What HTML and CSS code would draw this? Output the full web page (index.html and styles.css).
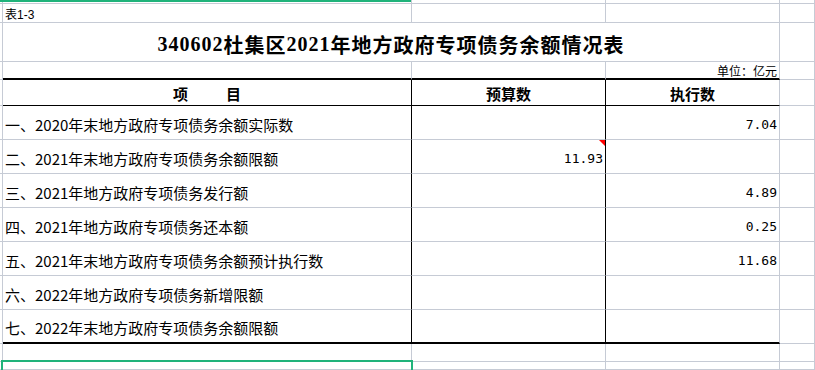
FILE: index.html
```html
<!DOCTYPE html>
<html lang="zh-CN">
<head>
<meta charset="utf-8">
<title>340602杜集区2021年地方政府专项债务余额情况表</title>
<link rel="stylesheet" href="styles.css">
</head>
<body>
<div class="sheet">
  <!-- row 0 (partial) -->
  <div class="c"></div><div class="c"></div><div class="c"></div><div class="c"></div><div class="c"></div>
  <!-- row 1 -->
  <div class="c"></div><div class="c note">表<span class="lat">1-3</span></div><div class="c"></div><div class="c"></div><div class="c"></div>
  <!-- row 2 title -->
  <div class="c"></div><div class="c title"><span class="lat">340602</span>杜集区<span class="lat">2021</span>年地方政府专项债务余额情况表</div><div class="c"></div>
  <!-- row 3 unit -->
  <div class="c"></div><div class="c tb"></div><div class="c tb"></div><div class="c tb unit">单位：亿元</div><div class="c"></div>
  <!-- row 4 header -->
  <div class="c"></div>
  <div class="c h hb vb"><span class="gap">项</span>目</div>
  <div class="c h hb vb">预算数</div>
  <div class="c h hb">执行数</div>
  <div class="c"></div>
  <!-- body rows -->
  <div class="c"></div><div class="c t vb">一、2020年末地方政府专项债务余额实际数</div><div class="c n vb"></div><div class="c n">7.04</div><div class="c"></div>
  <div class="c"></div><div class="c t vb">二、2021年末地方政府专项债务余额限额</div><div class="c n vb"><span class="flag"></span>11.93</div><div class="c n"></div><div class="c"></div>
  <div class="c"></div><div class="c t vb">三、2021年地方政府专项债务发行额</div><div class="c n vb"></div><div class="c n">4.89</div><div class="c"></div>
  <div class="c"></div><div class="c t vb">四、2021年地方政府专项债务还本额</div><div class="c n vb"></div><div class="c n">0.25</div><div class="c"></div>
  <div class="c"></div><div class="c t vb">五、2021年末地方政府专项债务余额预计执行数</div><div class="c n vb"></div><div class="c n">11.68</div><div class="c"></div>
  <div class="c"></div><div class="c t vb">六、2022年地方政府专项债务新增限额</div><div class="c n vb"></div><div class="c n"></div><div class="c"></div>
  <div class="c"></div><div class="c t vb tb">七、2022年末地方政府专项债务余额限额</div><div class="c n vb tb"></div><div class="c n tb"></div><div class="c"></div>
  <!-- row 12 -->
  <div class="c"></div><div class="c"></div><div class="c"></div><div class="c"></div><div class="c"></div>
  <!-- row 13 -->
  <div class="c"></div><div class="c"></div><div class="c"></div><div class="c"></div><div class="c"></div>

  <div class="sel-top"></div>
  <div class="sel-box"></div>
</div>
</body>
</html>
```
FILE: styles.css
```css
:root {
  --grid: #c6cbd5;
  --green: #20b37a;
}
html, body {
  margin: 0;
  padding: 0;
  background: #fff;
  overflow: hidden;
}
body {
  font-family: "Noto Sans CJK SC", "Liberation Sans", sans-serif;
  color: #000;
}
.sheet {
  position: relative;
  width: 815px;
  height: 370px;
  overflow: hidden;
  display: grid;
  grid-template-columns: 3px 409px 194px 174px 1fr;
  grid-template-rows: 4px 19px 39px 18px 26px repeat(7, 34px) 18px 1fr;
}
.c {
  box-sizing: border-box;
  border-right: 1px solid var(--grid);
  border-bottom: 1px solid var(--grid);
  min-width: 0;
  position: relative;
  white-space: nowrap;
  overflow: visible;
}
.lat {
  font-family: "Liberation Sans", sans-serif;
}
.note {
  font-size: 12px;
  line-height: 18px;
  padding-left: 2px;
  padding-top: 1px;
}
.title {
  grid-column: span 3;
  display: flex;
  align-items: center;
  justify-content: center;
  padding-top: 4px;
  font-size: 20px;
  font-weight: bold;
  letter-spacing: 1px;
}
.title .lat {
  font-family: "Liberation Serif", serif;
  font-weight: bold;
}
.unit {
  display: flex;
  align-items: center;
  justify-content: flex-end;
  padding-right: 2px;
  font-size: 12px;
  padding-top: 1px;
}
.tb {
  border-bottom: 2px solid #000;
}
.hb {
  border-bottom: 1px solid #000;
}
.vb {
  border-right: 1px solid #000;
}
.h {
  display: flex;
  align-items: center;
  justify-content: center;
  font-size: 15px;
  font-weight: bold;
  padding-top: 1px;
}
.gap {
  margin-right: 38px;
}
.t {
  display: flex;
  align-items: center;
  font-size: 15px;
  padding-left: 2px;
  padding-top: 3px;
}
.n {
  display: flex;
  align-items: center;
  justify-content: flex-end;
  padding-right: 2px;
  padding-top: 4px;
  font-family: "DejaVu Sans Mono", "Liberation Mono", monospace;
  font-size: 13px;
}
.flag {
  position: absolute;
  top: 0;
  right: 0;
  width: 0;
  height: 0;
  border-top: 6px solid #f00;
  border-left: 6px solid transparent;
}
.sel-top {
  position: absolute;
  left: 0;
  top: 0;
  width: 411px;
  height: 2px;
  background: var(--green);
}
.sel-box {
  position: absolute;
  left: 1px;
  top: 360px;
  width: 412px;
  height: 20px;
  box-sizing: border-box;
  border: 2px solid var(--green);
}
```
